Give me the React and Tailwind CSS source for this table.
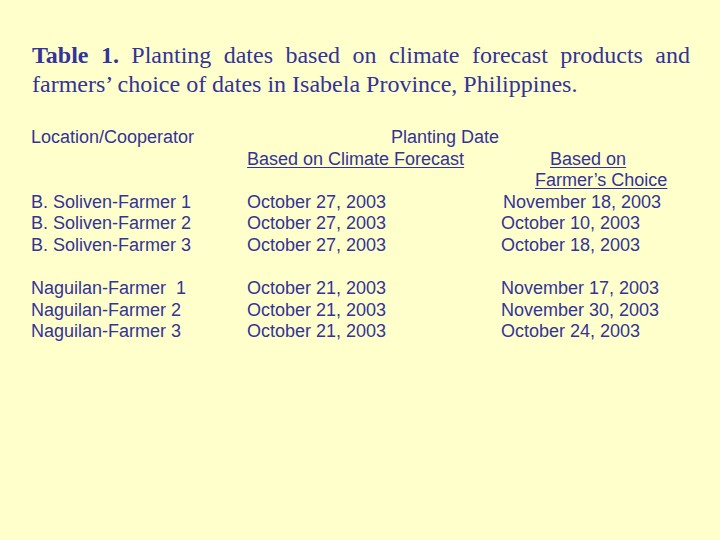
const soliven = [
  ["B. Soliven-Farmer 1", "October 27, 2003", "November 18, 2003", "pl-[2px]"],
  ["B. Soliven-Farmer 2", "October 27, 2003", "October 10, 2003", ""],
  ["B. Soliven-Farmer 3", "October 27, 2003", "October 18, 2003", ""],
];

const naguilan = [
  ["Naguilan-Farmer\u00a0 1", "October 21, 2003", "November 17, 2003", ""],
  ["Naguilan-Farmer 2", "October 21, 2003", "November 30, 2003", ""],
  ["Naguilan-Farmer 3", "October 21, 2003", "October 24, 2003", ""],
];

const Row = ({ a, b, c, cls = "" }) => (
  <div className="grid grid-cols-[216px_254px_1fr] h-[21.6px] whitespace-nowrap">
    <div>{a}</div>
    <div>{b}</div>
    <div className={cls}>{c}</div>
  </div>
);

export default function App() {
  return (
    <div className="w-[720px] h-[540px] bg-[#ffffcc] text-[#333399] overflow-hidden">
      {/* Caption */}
      <div
        className="pt-[41px] pl-[32px] w-[690px] text-[24px] leading-[29px]"
        style={{ fontFamily: '"Liberation Serif", "Times New Roman", serif' }}
      >
        <p className="text-justify [text-align-last:justify] whitespace-nowrap">
          <span className="font-bold">Table 1.</span> Planting dates based on climate
          forecast products and
        </p>
        <p className="whitespace-nowrap">
          farmers’ choice of dates in Isabela Province, Philippines.
        </p>
      </div>

      {/* Table */}
      <div
        className="mt-[28px] pl-[31px] text-[18px] leading-[21.6px]"
        style={{ fontFamily: '"Liberation Sans", Arial, sans-serif' }}
      >
        <Row a="Location/Cooperator" b={<span className="pl-[144px]">Planting Date</span>} c="" />
        <Row
          a=""
          b={<span className="underline underline-offset-2">Based on Climate Forecast</span>}
          c={<span className="pl-[49px]"><span className="underline underline-offset-2">Based on</span></span>}
        />
        <Row
          a=""
          b=""
          c={<span className="pl-[34px]"><span className="underline underline-offset-2">Farmer’s Choice</span></span>}
        />
        {soliven.map(([a, b, c, cls]) => (
          <Row key={a} a={a} b={b} c={c} cls={cls} />
        ))}
        <div className="h-[21.6px]" />
        {naguilan.map(([a, b, c, cls]) => (
          <Row key={a} a={a} b={b} c={c} cls={cls} />
        ))}
      </div>
    </div>
  );
}
